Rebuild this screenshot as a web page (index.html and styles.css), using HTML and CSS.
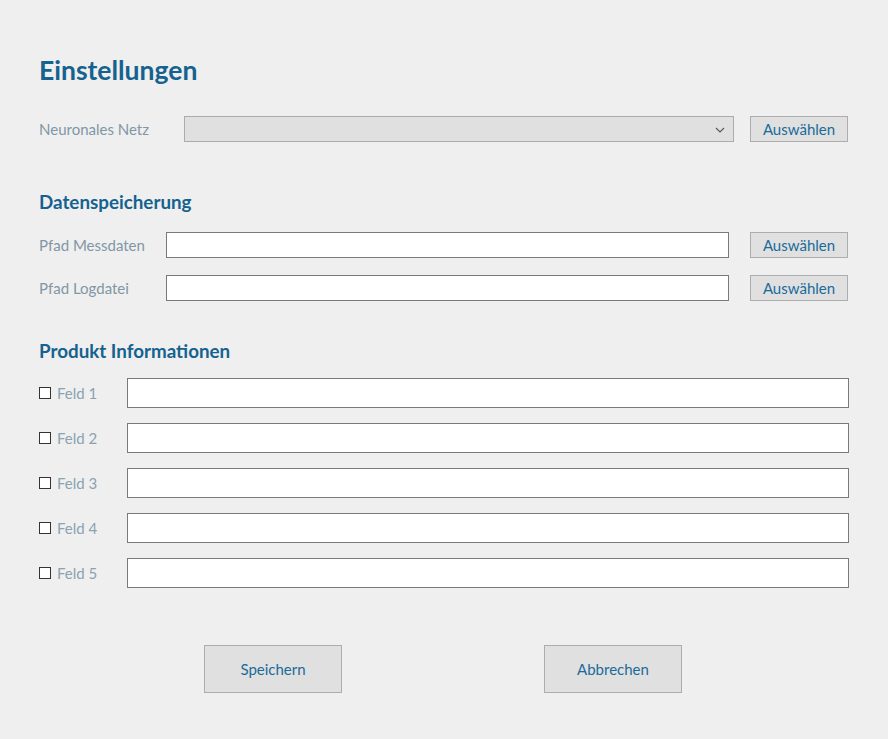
FILE: index.html
```html
<!DOCTYPE html>
<html lang="de">
<head>
<meta charset="utf-8">
<title>Einstellungen</title>
<link rel="stylesheet" href="styles.css">
</head>
<body>
<main class="page">
  <h1 class="title">Einstellungen</h1>

  <div class="row row-net">
    <span class="label label-net">Neuronales Netz</span>
    <div class="select">
      <svg class="chev" width="10" height="6" viewBox="0 0 10 6"><path d="M1 1 L5 5 L9 1" fill="none" stroke="#555" stroke-width="1.1"/></svg>
    </div>
    <button class="btn-small">Auswählen</button>
  </div>

  <h2 class="section">Datenspeicherung</h2>
  <div class="row row-path">
    <span class="label label-path">Pfad Messdaten</span>
    <div class="input"></div>
    <button class="btn-small">Auswählen</button>
  </div>
  <div class="row row-path second">
    <span class="label label-path">Pfad Logdatei</span>
    <div class="input"></div>
    <button class="btn-small">Auswählen</button>
  </div>

  <h2 class="section section-prod">Produkt Informationen</h2>
  <div class="fields">
    <div class="field"><span class="check"></span><span class="label label-field">Feld 1</span><div class="input tall"></div></div>
    <div class="field"><span class="check"></span><span class="label label-field">Feld 2</span><div class="input tall"></div></div>
    <div class="field"><span class="check"></span><span class="label label-field">Feld 3</span><div class="input tall"></div></div>
    <div class="field"><span class="check"></span><span class="label label-field">Feld 4</span><div class="input tall"></div></div>
    <div class="field"><span class="check"></span><span class="label label-field">Feld 5</span><div class="input tall"></div></div>
  </div>

  <div class="actions">
    <button class="btn-big">Speichern</button>
    <button class="btn-big">Abbrechen</button>
  </div>
</main>
</body>
</html>
```

FILE: styles.css
```css
html, body {
  margin: 0;
  padding: 0;
  background: #efefef;
}
body {
  font-family: "Lato", "Open Sans", sans-serif;
}
.page {
  width: 809px;
  padding: 55px 0 0 39px;
}
.title {
  margin: 0;
  font-size: 26.5px;
  line-height: 30px;
  font-weight: 700;
  color: #15628f;
}
.row {
  display: flex;
  align-items: center;
  height: 26px;
}
.row-net {
  margin-top: 31px;
}
.label {
  color: #7f97a6;
  font-size: 15px;
}
.label-net { width: 145px; flex: none; }
.label-path { width: 127px; flex: none; }
.select {
  flex: none;
  width: 548px;
  height: 24px;
  background: #e0e0e0;
  border: 1px solid #acacac;
  position: relative;
}
.chev {
  position: absolute;
  right: 8px;
  top: 10px;
}
.input {
  flex: none;
  width: 561px;
  height: 24px;
  background: #fff;
  border: 1px solid #7a7a7a;
}
.btn-small {
  margin-left: auto;
  width: 98px;
  height: 26px;
  padding: 0;
  background: #e0e0e0;
  border: 1px solid #adadad;
  color: #1a6b9a;
  font-family: inherit;
  font-size: 15px;
}
.row-net .btn-small { margin-left: 16px; }
.section {
  margin: 48px 0 0;
  font-size: 18.8px;
  line-height: 24px;
  font-weight: 700;
  color: #15628f;
}
.row-path { margin-top: 18px; }
.row-path.second { margin-top: 17px; }
.section-prod { margin-top: 38px; }
.fields {
  margin-top: 15px;
  display: flex;
  flex-direction: column;
  gap: 15px;
}
.field {
  display: flex;
  align-items: center;
  height: 30px;
}
.check {
  flex: none;
  width: 10px;
  height: 10px;
  border: 1px solid #333;
  background: #fff;
  margin-right: 6px;
}
.label-field {
  width: 70px;
  flex: none;
  color: #8ba2b1;
}
.input.tall {
  width: 720px;
  height: 28px;
}
.actions {
  margin-top: 57px;
  display: flex;
  padding-left: 165px;
  gap: 202px;
}
.btn-big {
  width: 138px;
  height: 48px;
  padding: 0;
  background: #e0e0e0;
  border: 1px solid #adadad;
  color: #1a6b9a;
  font-family: inherit;
  font-size: 15px;
}
```
